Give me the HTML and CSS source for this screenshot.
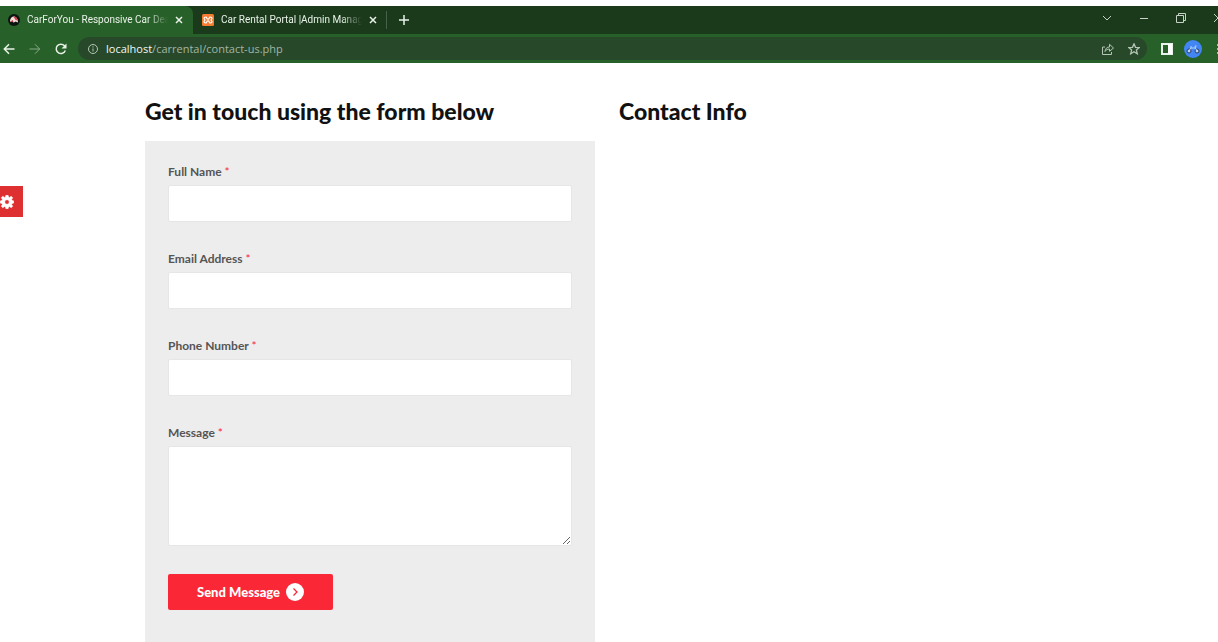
FILE: index.html
```
<!DOCTYPE html>
<html lang="en">
<head>
<meta charset="utf-8">
<title>CarForYou - Responsive Car Dealer</title>
<link rel="stylesheet" href="styles.css">
</head>
<body>
<header class="browser">
  <div class="tabs">
    <div class="tab tab-active">
      <svg class="favicon" width="12" height="12" viewBox="0 0 12 12"><circle cx="6" cy="6" r="6" fill="#0c1410"/><path d="M2 8C2 4 4 2.500 6 2.500S10 5 10 8.500L7.500 7.500 5.500 8.800 4.800 6.500z" fill="#f4dede"/><path d="M5 2.500 8 3 10 6.500 7.500 6 6.500 4.300zM2 8l2.500-2 .5 2z" fill="#d5404a"/></svg>
      <span class="tab-title">CarForYou - Responsive Car Deal</span>
      <button class="chrome-button" aria-label="Close tab"><svg width="8" height="8" viewBox="0 0 8 8"><path d="M1 1l6 6M7 1 1 7"/></svg></button>
    </div>
    <div class="tab tab-idle">
      <svg class="favicon" width="12" height="12" viewBox="0 0 12 12"><rect width="12" height="12" rx="1.500" fill="#f57c30"/><path d="M4.200 3C2.500 3 2 3.700 2 4.500L3 6 2 7.500C2 8.300 2.500 9 4.200 9L5 7.500C5 6.600 7 6.600 7 7.500L7.800 9C9.500 9 10 8.300 10 7.500L9 6 10 4.500C10 3.700 9.500 3 7.800 3L7 4.500C7 5.400 5 5.400 5 4.500z" fill="none" stroke="#fff" stroke-width="1.100"/></svg>
      <span class="tab-title">Car Rental Portal |Admin Manage</span>
      <button class="chrome-button" aria-label="Close tab"><svg width="8" height="8" viewBox="0 0 8 8"><path d="M1 1l6 6M7 1 1 7"/></svg></button>
    </div>
    <button class="chrome-button new-tab" aria-label="New tab"><svg width="10" height="10" viewBox="0 0 10 10"><path d="M5 0v10M0 5h10"/></svg></button>
    <div class="window-controls">
      <button class="chrome-button" aria-label="Search tabs"><svg width="10" height="10" viewBox="0 0 10 10"><path d="M1 3l4 4 4-4"/></svg></button>
      <button class="chrome-button" aria-label="Minimize"><svg width="10" height="10" viewBox="0 0 10 10"><path d="M1 5.500h8"/></svg></button>
      <button class="chrome-button" aria-label="Restore"><svg width="10" height="10" viewBox="0 0 10 10"><path d="M.5 2.500h7v7h-7zM2.500 2V.5h7v7H8"/></svg></button>
      <button class="chrome-button" aria-label="Close window"><svg width="10" height="10" viewBox="0 0 10 10"><path d="M1 1l8 8M9 1 1 9"/></svg></button>
    </div>
  </div>
  <div class="toolbar">
    <nav class="history">
      <button class="chrome-button" aria-label="Back"><svg width="12" height="12" viewBox="0 0 12 12"><path d="M11.500 6H1.500M6 1.300 1.300 6 6 10.700" stroke-width="1.500"/></svg></button>
      <button class="chrome-button dim" aria-label="Forward"><svg width="12" height="12" viewBox="0 0 12 12"><path d="M.5 6h10M6 1.300 10.700 6 6 10.700"/></svg></button>
      <button class="chrome-button" aria-label="Reload"><svg width="12" height="12" viewBox="0 0 12 12"><path d="M10.300 7.500A4.700 4.700 0 1 1 9.500 2.800L10.800 4.300" stroke-width="1.500"/><path d="M11.500.5v5h-5z" fill="#e9f2e9" stroke="none"/></svg></button>
    </nav>
    <div class="address">
      <svg width="10" height="10" viewBox="0 0 10 10"><circle cx="5" cy="5" r="4.500"/><path d="M5 4.500v3M5 2.300v1.200"/></svg>
      <a class="url" href="#"><span class="host">localhost</span>/carrental/contact-us.php</a>
      <button class="chrome-button" aria-label="Share"><svg width="12" height="12" viewBox="0 0 12 12"><path d="M3 4H.5v7.500h9V9M3 8.500C3.300 5.500 5 4 7.500 4V1.300L11.500 5 7.500 8.300V6C5.500 6 4 6.800 3 8.500z"/></svg></button>
      <button class="chrome-button" aria-label="Bookmark"><svg width="12" height="12" viewBox="0 0 12 12"><path d="M6 .8 7.500 4.300 11.300 4.600 8.400 7.100 9.300 10.800 6 8.800 2.700 10.800 3.600 7.100.7 4.600 4.500 4.300z" stroke-width="1.300"/></svg></button>
    </div>
    <button class="chrome-button" aria-label="Side panel"><svg width="12" height="12" viewBox="0 0 12 12"><path d="M1 1h10v10H1z" stroke-width="2"/><path d="M7 1h4v10H7z" fill="#fff" stroke="none"/></svg></button>
    <button class="chrome-button profile" aria-label="Profile"><svg width="18" height="18" viewBox="0 0 18 18"><circle cx="9" cy="9" r="9" fill="#4285f4" stroke="none"/><g fill="#b9d2f5" stroke="#263b63"><circle cx="5" cy="11" r="2"/><circle cx="13" cy="11" r="2"/></g><path d="M5 10.500 7 8h4l2 2.500M11.500 8 11 6h1.500M6 7h2" stroke="#b9d2f5"/></svg></button>
    <button class="chrome-button menu" aria-label="Menu"><svg width="4" height="12" viewBox="0 0 4 12"><g fill="#d5e2d5" stroke="none"><circle cx="2" cy="2" r="1"/><circle cx="2" cy="6" r="1"/><circle cx="2" cy="10" r="1"/></g></svg></button>
  </div>
</header>
<button class="settings" aria-label="Style settings"><svg width="14" height="14" viewBox="0 0 14 14"><path fill="#fff" stroke="#fff" stroke-width=".6" stroke-linejoin="round" fill-rule="evenodd" d="M5.900.3h2.200l.4 1.600 1.100.5L11.200 1.300l1.500 1.500-1.100 1.600.5 1.100 1.600.4v2.200l-1.600.4-.5 1.100 1.100 1.600-1.500 1.500-1.600-1.100-1.100.5-.4 1.600H5.900l-.4-1.600-1.100-.5-1.600 1.100-1.500-1.500 1.100-1.600-.5-1.100L.3 8.100V5.900l1.600-.4.5-1.100L1.300 2.800l1.500-1.500 1.600 1.100 1.100-.5zM7 4.700a2.300 2.300 0 1 0 0 4.600 2.300 2.300 0 0 0 0-4.600z"/></svg></button>
<main class="contact">
  <section>
    <h1 class="heading">Get in touch using the form below</h1>
    <form class="form">
      <div class="field"><label for="name">Full Name <span class="required">*</span></label><input id="name" type="text"></div>
      <div class="field"><label for="email">Email Address <span class="required">*</span></label><input id="email" type="email"></div>
      <div class="field"><label for="phone">Phone Number <span class="required">*</span></label><input id="phone" type="tel"></div>
      <div class="field"><label for="message">Message <span class="required">*</span></label><textarea id="message"></textarea></div>
      <button class="send" type="submit">Send Message <svg width="18" height="18" viewBox="0 0 18 18"><circle cx="9" cy="9" r="9" fill="#fff"/><path d="M7.500 5.500 11 9l-3.500 3.500" fill="none" stroke="#fa2837" stroke-width="1.300"/></svg></button>
    </form>
  </section>
  <section>
    <h2 class="heading">Contact Info</h2>
  </section>
</main>
</body>
</html>
```
FILE: styles.css
```
* { box-sizing: border-box; }
body { margin: 0; background: #fff; color: #555; font-family: Lato, sans-serif; overflow: hidden; }
button { font: inherit; cursor: pointer; }

/* Browser bar */
.browser { padding-top: 6px; font: 11px/16px "Open Sans", "Noto Sans", sans-serif; color: #e9f2e9; overflow: hidden; }
.chrome-button { display: flex; flex: none; padding: 0; border: 0; background: none; }
.browser svg { display: block; flex: none; fill: none; stroke: #e9f2e9; }
.browser .favicon { stroke: none; }
.tabs { display: flex; height: 28px; background: #1b3a1b; }
.tab { display: flex; align-items: center; gap: 7px; height: 28px; }
.tab-active { width: 193px; padding: 0 10px 0 8px; background: #286029; border-radius: 0 8px 0 0; }
.tab-idle { width: 193px; padding: 0 9px; }
.tab-title { flex: 1; min-width: 0; font-family: Roboto, sans-serif; font-size: 10px; white-space: nowrap; mask-image: linear-gradient(to right, #000 85%, transparent); }
.tab .chrome-button svg { stroke-width: 1.5; }
.new-tab { align-self: center; padding: 4px 12px; }
.new-tab svg { stroke-width: 1.5; }
.tabs > .new-tab { border-left: 1px solid #44634a; }
.window-controls { display: flex; align-items: center; gap: 27px; margin: 0 -5px 4px auto; }
.window-controls svg { stroke: #c5d2c5; }
.toolbar { display: flex; align-items: center; gap: 14px; height: 29px; padding-left: 3px; background: #286029; }
.history { display: flex; gap: 14px; }
.dim { opacity: 0.5; }
.address { display: flex; flex: 1; align-items: center; gap: 14px; height: 23px; margin-left: -3px; padding: 0 7px 0 10px; border-radius: 12px; background: #27492a; }
.address svg { stroke: #b5c5b5; }
.url { flex: 1; margin-left: -6px; color: #a3b5a3; text-decoration: none; }
.host { color: #f3f8f3; }
.profile { margin-left: -3px; }
.menu { margin: 0 -2px 0 0; }

/* Contact page */
.settings { position: absolute; top: 186px; left: 0; display: flex; align-items: center; width: 23px; height: 31px; padding: 0; border: 0; background: #de3030; }
.contact { display: grid; grid-template-columns: 1fr 1fr; gap: 24px; padding: 34px 149px 0 145px; }
.heading { margin: 0 0 16px; color: #111; font-size: 23px; font-weight: 900; line-height: 28px; }
.form { padding: 22px 23px 48px; background: #ededed; }
.field { display: grid; gap: 4px; margin-bottom: 28px; }
.field label { font-size: 12px; font-weight: 700; line-height: 18px; }
.required { color: #fa2837; font-weight: 400; }
.field input, .field textarea { display: block; width: 100%; height: 37px; padding: 8px; border: 1px solid #e6e6e6; border-radius: 2px; background: #fff; font: inherit; }
.field textarea { height: 100px; resize: vertical; }
.send { display: flex; align-items: center; gap: 6px; height: 36px; padding: 0 29px; border: 0; border-radius: 2px; background: #fa2837; color: #fff; font-size: 13px; font-weight: 900; }
```
